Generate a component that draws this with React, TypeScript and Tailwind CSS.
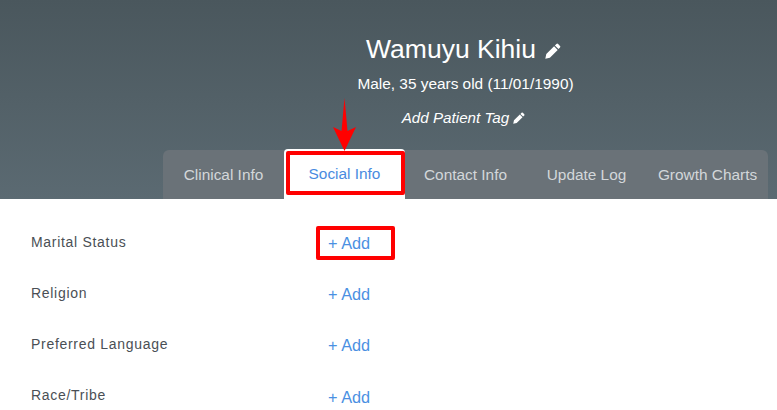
import React from "react";

const tabs = ["Clinical Info", "Social Info", "Contact Info", "Update Log", "Growth Charts"];
const rows = ["Marital Status", "Religion", "Preferred Language", "Race/Tribe"];

const Pencil = ({ className }: { className: string }) => (
  <svg viewBox="0 0 16 16" className={className} fill="currentColor">
    <path d="M11.4 1a1.2 1.2 0 0 1 1.7 0l1.9 1.9a1.2 1.2 0 0 1 0 1.7l-1.5 1.5-3.6-3.6zM9.1 3.3l3.6 3.6-7.8 7.8-4.6 1 1-4.6z" />
  </svg>
);

export default function App() {
  return (
    <div className="relative w-[777px] h-[410px] overflow-hidden bg-white font-['Liberation_Sans',sans-serif]">
      <div className="h-[199px] flex flex-col items-center bg-gradient-to-b from-[#4a575d] to-[#5b6a72] text-white">
        <div className="relative left-[75px] mt-[31px] flex items-center gap-[9px] text-[26.5px] leading-[36px]">
          Wamuyu Kihiu
          <Pencil className="w-4 h-4 mt-[3px]" />
        </div>
        <div className="relative left-[77px] mt-[7px] text-[15.4px] leading-[20px]">Male, 35 years old (11/01/1990)</div>
        <div className="relative left-[75px] mt-[14px] flex items-center gap-[4px] text-[15.2px] leading-[20px] italic">
          Add Patient Tag
          <Pencil className="w-3 h-3" />
        </div>
        <div className="mt-auto self-end mr-[9px] w-[605px] h-[49px] flex rounded-t-[6px] bg-[#6a7278] text-[15.4px] text-[#d3d7da]">
          {tabs.map((tab) =>
            tab === "Social Info" ? (
              <div
                key={tab}
                className="relative -mt-px w-[121px] h-[50px] flex items-center justify-center rounded-t-[4px] bg-white text-[#4a8be0]"
              >
                {tab}
                {/* red annotation */}
                <div className="absolute left-[2px] top-[2px] w-[119px] h-[44px] border-[4px] border-[#ff0000] rounded-[2px]" />
              </div>
            ) : (
              <div key={tab} className="w-[121px] flex items-center justify-center whitespace-nowrap">
                {tab}
              </div>
            )
          )}
        </div>
      </div>
      <div className="relative pt-[18.4px] pl-[31px]">
        {rows.map((row, i) => (
          <div key={row} className="flex items-center h-[51.3px] text-[14px] tracking-[0.7px] text-[#4a4f55]">
            <div className="w-[297px] pb-[2px]">{row}</div>
            <div className="relative text-[16.3px] tracking-normal text-[#4a90e2]">
              + Add
              {i === 0 && (
                <div className="absolute -left-[12px] -top-[5px] w-[79px] h-[34px] border-[4px] border-[#ff0000] rounded-[2px]" />
              )}
            </div>
          </div>
        ))}
      </div>
      {/* annotation arrow */}
      <svg viewBox="0 0 23 54" className="absolute left-[333px] top-[98px] w-[23px] h-[54px]" fill="#ff0000">
        <path d="M11.5 0 L14.5 33 L23 29 L11.5 53 L0 29 L8.5 33 Z" />
      </svg>
    </div>
  );
}
